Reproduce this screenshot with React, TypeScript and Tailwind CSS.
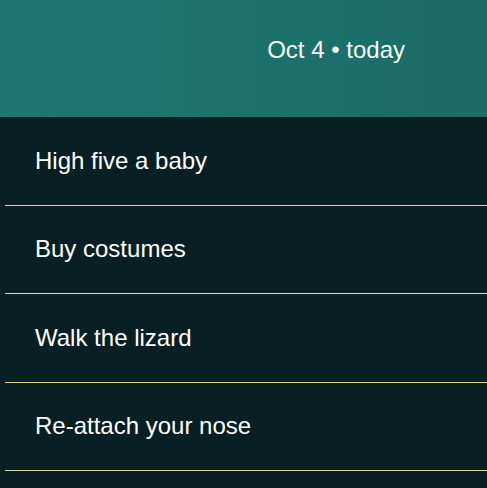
const tasks: { title: string; line: string }[] = [
  { title: 'High five a baby', line: 'border-[#d9d5a6]' },
  { title: 'Buy costumes', line: 'border-[#d6d8b0]' },
  { title: 'Walk the lizard', line: 'border-[#e3c98a]' },
  { title: 'Re-attach your nose', line: 'border-[#dcd29c]' },
];

export default function App() {
  return (
    <div
      className="h-[488px] w-[487px] overflow-hidden bg-[#081f23] text-white"
      style={{ fontFamily: '"Liberation Sans", Arial, sans-serif' }}
    >
      {/* Header */}
      <header className="flex h-[117px] items-start justify-end bg-gradient-to-r from-[#1e7773] to-[#1b6b66] pr-[82px] pt-[38px]">
        <span className="text-[24px] leading-none text-[#f4fbfa]">Oct 4 &bull; today</span>
      </header>

      {/* Task list */}
      <ul className="ml-[5px]">
        {tasks.map((t) => (
          <li
            key={t.title}
            className={`flex h-[88.5px] items-center border-b pl-[30px] text-[24px] ${t.line}`}
          >
            {t.title}
          </li>
        ))}
      </ul>
    </div>
  );
}
